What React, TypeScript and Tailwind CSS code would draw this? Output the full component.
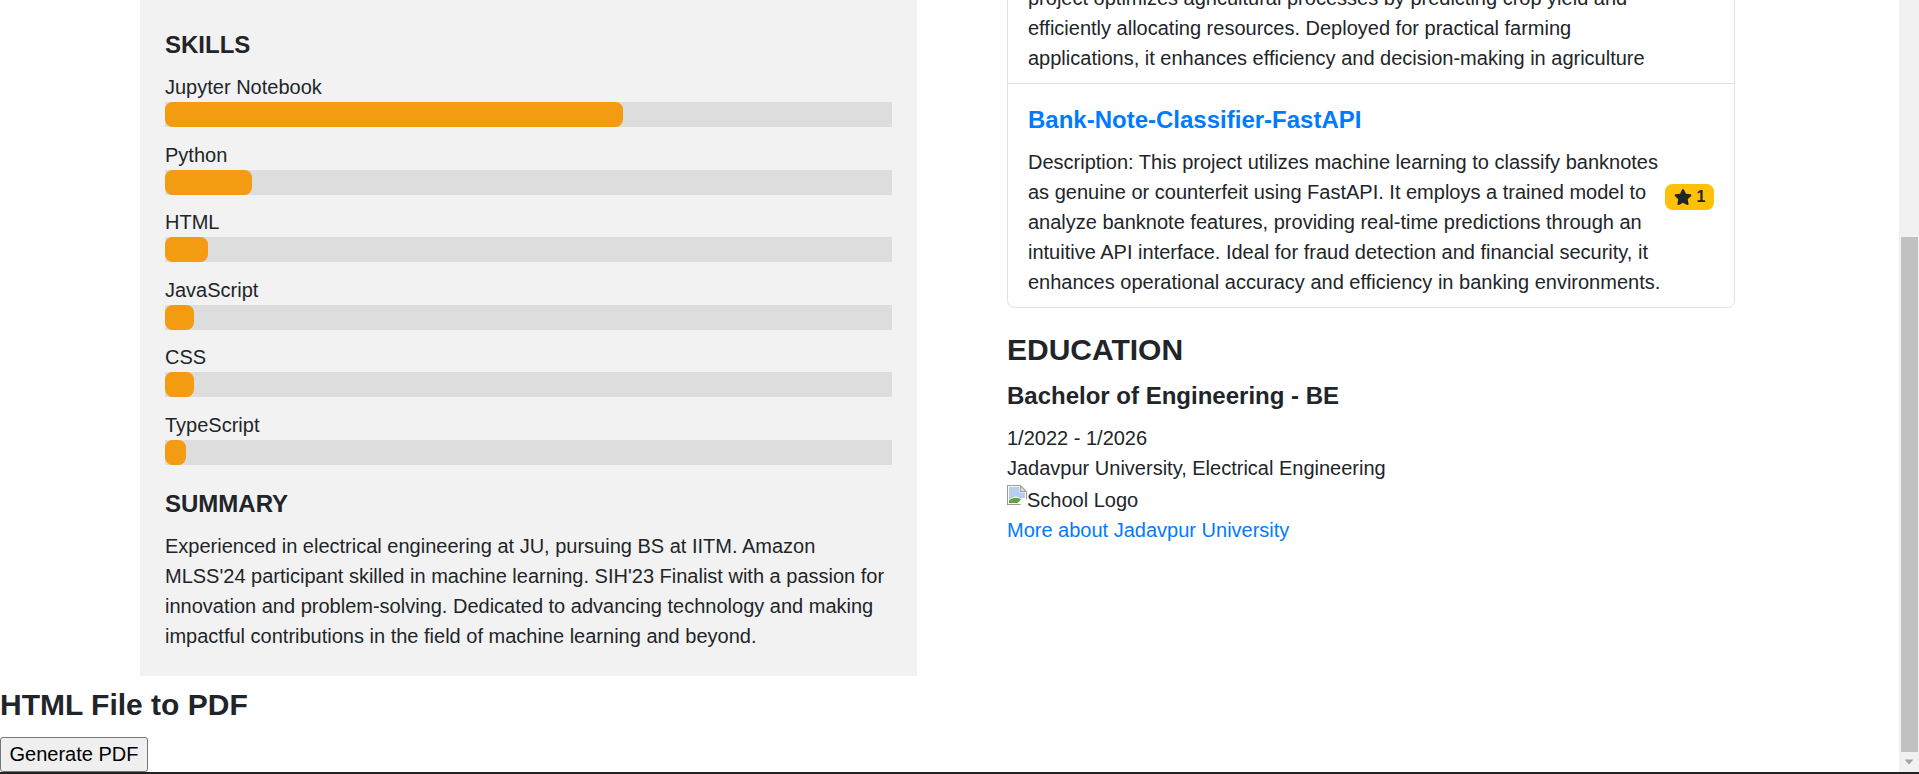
import React from 'react';
import { FaStar } from 'react-icons/fa';

const skills = [
  { name: 'Jupyter Notebook', width: 'w-[63%]' },
  { name: 'Python', width: 'w-[12%]' },
  { name: 'HTML', width: 'w-[5.9%]' },
  { name: 'JavaScript', width: 'w-[4%]' },
  { name: 'CSS', width: 'w-[4%]' },
  { name: 'TypeScript', width: 'w-[2.9%]' },
];

const BrokenImage: React.FC = () => (
  <svg width="20" height="20" viewBox="0 0 20 20" className="shrink-0 mt-[2px]">
    <path d="M0 0H13.5L20 6.5V20H0Z" fill="#9a9a9a" />
    <path d="M1 1H13V7H19V19H1Z" fill="#fff" />
    <path d="M2 2H12.5V7.5H18V13L13 13.5L9 11L2 15Z" fill="#b9cdf0" />
    <path d="M2 18V15.5C6 12 11 12 14 14.5L10.5 18Z" fill="#5fa53c" />
    <path d="M14 2L18 6H14Z" fill="#f4f4f4" stroke="#b0b0b0" strokeWidth="0.6" />
    <path d="M20 14L13 20H20Z" fill="#fff" />
  </svg>
);

const App: React.FC = () => {
  return (
    <div className="flex flex-col h-[774px] overflow-hidden bg-white font-['Liberation_Sans',Arial,sans-serif] text-[20px] leading-[30px] text-[#212529]">
      <div className="flex flex-1 min-h-0">
        <main className="flex-1 min-w-0 overflow-hidden">
          <div className="flex gap-[90px] pl-[140px] -mt-[40px]">
            <section className="w-[777px] shrink-0 bg-[#f2f2f2] px-[25px] pt-[70px] pb-[25px]">
              <h4 className="text-[24px] leading-[29px] font-bold mb-[13px]">SKILLS</h4>
              {skills.map((skill) => (
                <div key={skill.name} className="mb-[12.5px]">
                  <div>{skill.name}</div>
                  <div className="h-[25px] bg-[#ddd]">
                    <div className={`h-full rounded-[7.5px] bg-[#f39c12] ${skill.width}`}></div>
                  </div>
                </div>
              ))}
              <h4 className="text-[24px] leading-[29px] font-bold pt-[12px] mb-[13px]">SUMMARY</h4>
              <p>
                Experienced in electrical engineering at JU, pursuing BS at IITM. Amazon MLSS'24 participant skilled in machine learning. SIH'23 Finalist with a passion for innovation and problem-solving. Dedicated to advancing technology and making impactful contributions in the field of machine learning and beyond.
              </p>
            </section>
            <section className="w-[728px] shrink-0 pt-[12px]">
              <div className="border border-[#dee2e6] rounded-b-[7.5px]">
                <div className="px-[20px] py-[10px] border-b border-[#dee2e6]">
                  <p className="w-[637px]">
                    project optimizes agricultural processes by predicting crop yield and efficiently allocating resources. Deployed for practical farming applications, it enhances efficiency and decision-making in agriculture
                  </p>
                </div>
                <div className="flex items-center justify-between px-[20px] py-[10px]">
                  <div className="w-[637px] shrink-0 pt-[11px]">
                    <h5 className="text-[24px] leading-[30px] font-bold text-[#007bff] mb-[12px]">Bank-Note-Classifier-FastAPI</h5>
                    <p>
                      Description: This project utilizes machine learning to classify banknotes as genuine or counterfeit using FastAPI. It employs a trained model to analyze banknote features, providing real-time predictions through an intuitive API interface. Ideal for fraud detection and financial security, it enhances operational accuracy and efficiency in banking environments.
                    </p>
                  </div>
                  <span className="flex items-center gap-[5px] h-[26px] w-[49px] mt-[2px] justify-center rounded-[7.5px] bg-[#ffc107] text-[16px] font-bold leading-none">
                    <FaStar className="w-[18px] h-[16px]" />
                    1
                  </span>
                </div>
              </div>
              <h4 className="text-[30px] leading-[36px] font-bold mt-[24px] mb-[13px]">EDUCATION</h4>
              <h5 className="text-[24px] leading-[30px] font-bold mb-[12px]">Bachelor of Engineering - BE</h5>
              <p>1/2022 - 1/2026</p>
              <p>Jadavpur University, Electrical Engineering</p>
              <div className="flex items-start h-[32px]">
                <BrokenImage />
                <span className="mt-[2px]">School Logo</span>
              </div>
              <a href="#" className="text-[#007bff]">More about Jadavpur University</a>
            </section>
          </div>
          <h2 className="text-[30px] leading-[36px] font-bold mt-[11px] mb-[14px]">HTML File to PDF</h2>
          <button className="block h-[35px] w-[148px] bg-[#efefef] border border-[#767676] rounded-[3px] text-black text-[20px] leading-[23px]">
            Generate PDF
          </button>
        </main>
        <aside className="w-[20px] shrink-0 flex flex-col items-center bg-[#f1f1f1]">
          <div className="w-[17px] h-[515px] mt-[237px] bg-[#c1c1c1]"></div>
          <div className="flex-1 flex items-center justify-center">
            <svg width="10" height="6" viewBox="0 0 10 6">
              <path d="M0.5 0.5H9.5L5 5.5Z" fill="#a3a3a3" />
            </svg>
          </div>
        </aside>
      </div>
      <div className="h-[2px] shrink-0 bg-[#222]"></div>
    </div>
  );
};

export default App;
